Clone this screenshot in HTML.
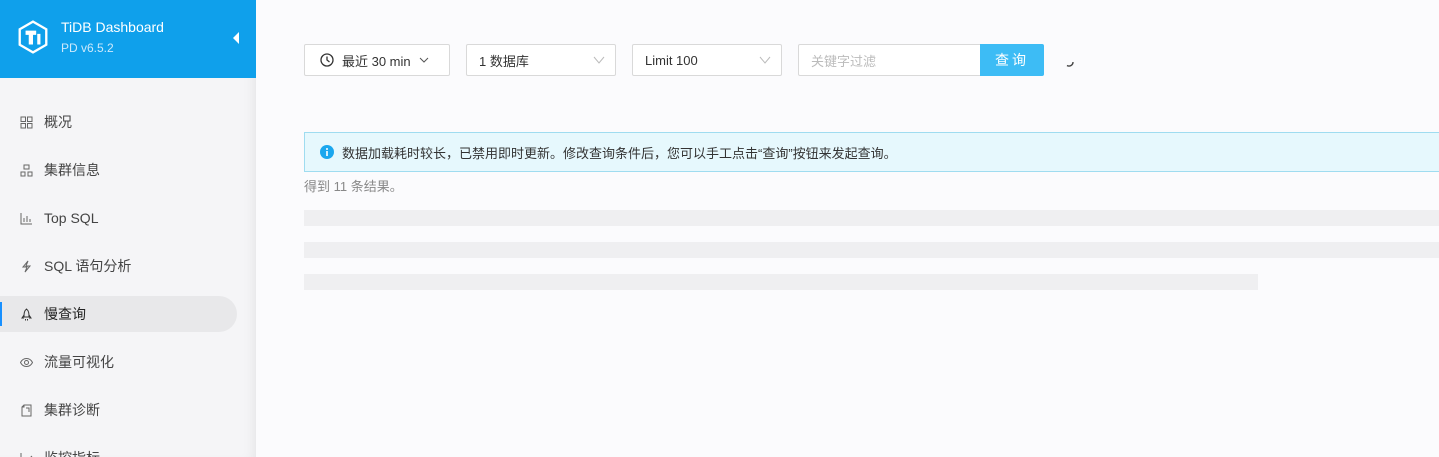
<!DOCTYPE html>
<html><head><meta charset="utf-8"><style>
*{box-sizing:border-box;margin:0;padding:0}
html{width:1439px;height:457px;overflow:hidden}
body{width:1439px;height:457px;overflow:hidden;background:#fbfbfd;font-family:"Liberation Sans","Noto Sans CJK SC",sans-serif;font-size:14px;color:#333;position:relative}
.side{position:absolute;left:0;top:0;width:256px;height:457px;background:#f5f5f7;box-shadow:inset -10px 0 12px -8px rgba(0,0,0,.07);overflow:hidden}
.hd{height:78px;background:#0fa0eb;color:#fff;position:relative}
.logo{position:absolute;left:18px;top:20px}
.t1{position:absolute;left:61px;top:19px;font-size:14px}
.t2{position:absolute;left:61px;top:41px;font-size:12px;color:#cde9fb}
.tri{position:absolute;left:233px;top:32px;width:0;height:0;border-top:6px solid transparent;border-bottom:6px solid transparent;border-right:6px solid #fff}
.item{position:absolute;left:0;height:36px;width:237px;display:flex;align-items:center;padding-left:20px;color:#444;font-size:14px}
.item svg{margin-right:11px}
.act{background:#e8e8ea;border-radius:0 18px 18px 0;color:#222}
.act:before{content:"";position:absolute;left:0;top:6px;width:2px;height:24px;background:#1890ff}
.box{position:absolute;top:44px;height:32px;background:#fff;border:1px solid #d9d9d9;border-radius:2px;display:flex;align-items:center;padding-left:12px;font-size:13px;color:#333}
.chev{position:absolute;right:10px;top:9px}
.btn{position:absolute;left:980px;top:44px;width:64px;height:32px;background:#3dbcf5;color:#fff;font-size:14px;display:flex;align-items:center;justify-content:center;letter-spacing:3px;border-radius:0 2px 2px 0}
.alert{position:absolute;left:304px;top:132px;width:1140px;height:40px;background:#e6f8fd;border:1px solid #9fdcf0;display:flex;align-items:center;padding-left:15px;font-size:13px;color:#333}
.bar{position:absolute;left:304px;height:16px;background:#efeff1}
</style></head><body>
<div class="side">
<div class="hd">
<svg class="logo" width="30" height="34" viewBox="0 0 28 32"><path d="M14 1.5L26.5 8.7V23.3L14 30.5L1.5 23.3V8.7Z" fill="none" stroke="#fff" stroke-width="2.2"/><path d="M7 10h10v4h-3v9h-4v-9H7z M18 13h3v10h-3z" fill="#fff"/></svg>
<div class="t1">TiDB Dashboard</div><div class="t2">PD v6.5.2</div><div class="tri"></div>
</div>
<div class="item" style="top:104px"><svg width="13" height="13" viewBox="0 0 13 13" fill="none" stroke="#666"><rect x="1" y="1" width="4.5" height="4.5"/><rect x="7.5" y="1" width="4.5" height="4.5"/><rect x="1" y="7.5" width="4.5" height="4.5"/><rect x="7.5" y="7.5" width="4.5" height="4.5"/></svg>概况</div>
<div class="item" style="top:152px"><svg width="13" height="13" viewBox="0 0 13 13" fill="none" stroke="#666"><rect x="4" y="1" width="5" height="4"/><rect x="1" y="8" width="4" height="4"/><rect x="8" y="8" width="4" height="4"/></svg>集群信息</div>
<div class="item" style="top:200px"><svg width="13" height="13" viewBox="0 0 13 13" fill="none" stroke="#666"><path d="M1 1v11h11M4 10V6M7 10V4M10 10V7"/></svg>Top SQL</div>
<div class="item" style="top:248px"><svg width="13" height="13" viewBox="0 0 13 13" fill="none" stroke="#666"><path d="M8 1L3 7h4l-2 5 5-6H6z"/></svg>SQL 语句分析</div>
<div class="item act" style="top:296px"><svg width="13" height="13" viewBox="0 0 13 13" fill="none" stroke="#333"><path d="M6.5 1C4 3 4 6 4 9h5c0-3 0-6-2.5-8zM4 7L2 10h2M9 7l2 3H9M5.5 11v1.5M7.5 11v1.5"/></svg>慢查询</div>
<div class="item" style="top:344px"><svg width="13" height="13" viewBox="0 0 13 13" fill="none" stroke="#666"><path d="M0.5 6.5C2 3.5 4 2.5 6.5 2.5S11 3.5 12.5 6.5C11 9.5 9 10.5 6.5 10.5S2 9.5 0.5 6.5z"/><circle cx="6.5" cy="6.5" r="2"/></svg>流量可视化</div>
<div class="item" style="top:392px"><svg width="13" height="13" viewBox="0 0 13 13" fill="none" stroke="#666"><path d="M4 1h7v11H2V3zM4 1v2H2M6 4h3v4"/></svg>集群诊断</div>
<div class="item" style="top:440px"><svg width="13" height="13" viewBox="0 0 13 13" fill="none" stroke="#666"><path d="M1 1v11h11M3 9l3-3 2 2 4-4"/></svg>监控指标</div>
</div>
<div class="box" style="left:304px;width:146px;padding-left:15px"><svg width="14" height="14" viewBox="0 0 14 14" fill="none" stroke="#333" stroke-width="1.3" style="margin-right:8px"><circle cx="7" cy="7" r="6"/><path d="M7 3.5V7l2.5 2"/></svg>最近 30 min<svg width="10" height="6" viewBox="0 0 10 6" style="margin-left:8px" fill="none" stroke="#555"><path d="M1 1l4 4 4-4"/></svg></div>
<div class="box" style="left:466px;width:150px">1 数据库<svg class="chev" width="12" height="12" viewBox="0 0 12 12" fill="none" stroke="#bbb"><path d="M1 3l5 6 5-6"/></svg></div>
<div class="box" style="left:632px;width:150px">Limit 100<svg class="chev" width="12" height="12" viewBox="0 0 12 12" fill="none" stroke="#bbb"><path d="M1 3l5 6 5-6"/></svg></div>
<div class="box" style="left:798px;width:184px;color:#bbb;border-radius:2px 0 0 2px">关键字过滤</div>
<div class="btn">查询</div>
<svg style="position:absolute;left:1063px;top:56px" width="12" height="12" viewBox="0 0 12 12" fill="none" stroke="#444" stroke-width="1.4"><path d="M10 6a4 4 0 0 1-6 3.5"/></svg>
<div class="alert"><svg width="14" height="14" viewBox="0 0 14 14" style="margin-right:8px"><circle cx="7" cy="7" r="7" fill="#1aa7ee"/><rect x="6.2" y="6" width="1.6" height="5" fill="#fff"/><circle cx="7" cy="4" r="1" fill="#fff"/></svg>数据加载耗时较长，已禁用即时更新。修改查询条件后，您可以手工点击“查询”按钮来发起查询。</div>
<div style="position:absolute;left:304px;top:176px;font-size:13px;color:#888">得到 11 条结果。</div>
<div class="bar" style="top:210px;width:1135px"></div>
<div class="bar" style="top:242px;width:1135px"></div>
<div class="bar" style="top:274px;width:954px"></div>
</body></html>
